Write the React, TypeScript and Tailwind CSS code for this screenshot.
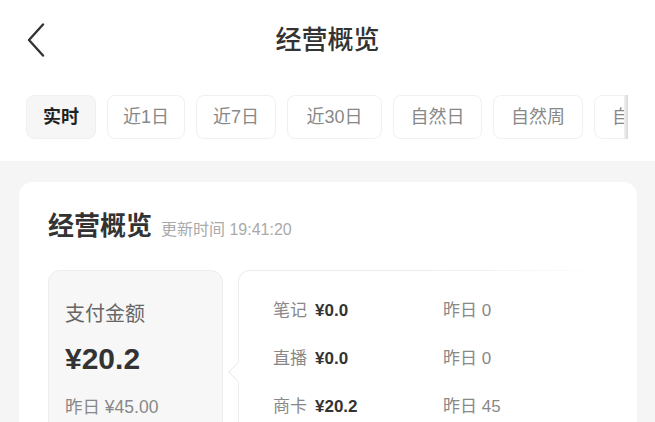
const tabs = [
  { label: '实时', w: 'w-[70px]', active: true },
  { label: '近1日', w: 'w-[78px]' },
  { label: '近7日', w: 'w-[80px]' },
  { label: '近30日', w: 'w-[95px]' },
  { label: '自然日', w: 'w-[89px]' },
  { label: '自然周', w: 'w-[90px]' },
  { label: '自然月', w: 'w-[90px]' },
]

const rows = [
  { name: '笔记', value: '¥0.0', prev: '昨日 0' },
  { name: '直播', value: '¥0.0', prev: '昨日 0' },
  { name: '商卡', value: '¥20.2', prev: '昨日 45' },
]

function BackIcon() {
  return (
    <svg width="18" height="34" viewBox="0 0 18 34" fill="none">
      <polyline points="16,1.5 2,17 16,32.5" stroke="#333" strokeWidth="2.4" strokeLinecap="round" strokeLinejoin="round" />
    </svg>
  )
}

function Header() {
  return (
    <div className="grid grid-cols-[1fr_auto_1fr] items-center h-[80px]">
      <div className="pl-[27px] flex items-center">
        <BackIcon />
      </div>
      <h1 className="text-[26px] font-medium text-[#333] leading-none">经营概览</h1>
      <div />
    </div>
  )
}

function Tabs() {
  return (
    <div className="flex items-stretch mt-[15px] pl-[26px] w-[628px] h-[44px]">
      <div className="flex-1 flex gap-[11px] overflow-hidden">
        {tabs.map(t => (
          <div
            key={t.label}
            className={
              'shrink-0 h-[44px] rounded-[8px] border border-[#f0f0f0] flex items-center justify-center text-[18px] ' +
              t.w + ' ' +
              (t.active ? 'bg-[#f6f6f6] text-[#222] font-bold' : 'bg-white text-[#888]')
            }
          >
            {t.label}
          </div>
        ))}
      </div>
      <div className="w-[4px] bg-gradient-to-r from-[#f0f0f0] to-[#d9d9d9]" />
    </div>
  )
}

function PayBox() {
  return (
    <div className="w-[175px] h-[190px] shrink-0 rounded-[12px] bg-[#f7f7f7] border border-[#ededed] pl-[16px] pt-[29px]">
      <div className="text-[20px] leading-[28px] text-[#666]">支付金额</div>
      <div className="mt-[13px] text-[30px] leading-[36px] font-bold text-[#333]">¥20.2</div>
      <div className="mt-[18px] text-[17.5px] leading-[24px] text-[#888]">昨日 ¥45.00</div>
    </div>
  )
}

function Breakdown() {
  return (
    <div className="relative flex-1 h-[190px] pt-px pl-px rounded-tl-[12px] bg-gradient-to-r from-[#ececec] via-[#ececec] to-white">
      <div className="h-full rounded-tl-[11px] bg-white pt-[16px] pl-[34px]">
        {rows.map(r => (
          <div key={r.name} className="flex items-center h-[48px] text-[17px]">
            <div className="w-[170px] flex items-center gap-[8px]">
              <span className="text-[#888]">{r.name}</span>
              <span className="font-bold text-[#333]">{r.value}</span>
            </div>
            <span className="text-[#888]">{r.prev}</span>
          </div>
        ))}
      </div>
      {/* 指向左侧的小箭头 */}
      <div className="absolute left-[-7px] top-[95px] w-[14px] h-[14px] rotate-45 bg-white border-l border-b border-[#ececec]" />
    </div>
  )
}

export default function App() {
  return (
    <div className="w-[655px] h-[422px] overflow-hidden bg-[#f5f5f5] font-['Liberation_Sans','Noto_Sans_CJK_SC',sans-serif]">
      <div className="bg-white h-[161px]">
        <Header />
        <Tabs />
      </div>
      <div className="px-[19px] pt-[21px] pr-[18px]">
        <div className="bg-white rounded-[14px] pt-[26px] pl-[29px] pr-[29px] h-[300px]">
          <div className="flex items-baseline gap-[9px] h-[36px]">
            <span className="text-[26px] leading-[36px] font-bold text-[#333]">经营概览</span>
            <span className="text-[16px] text-[#aaa]">更新时间 19:41:20</span>
          </div>
          <div className="flex gap-[15px] mt-[26px]">
            <PayBox />
            <Breakdown />
          </div>
        </div>
      </div>
    </div>
  )
}
